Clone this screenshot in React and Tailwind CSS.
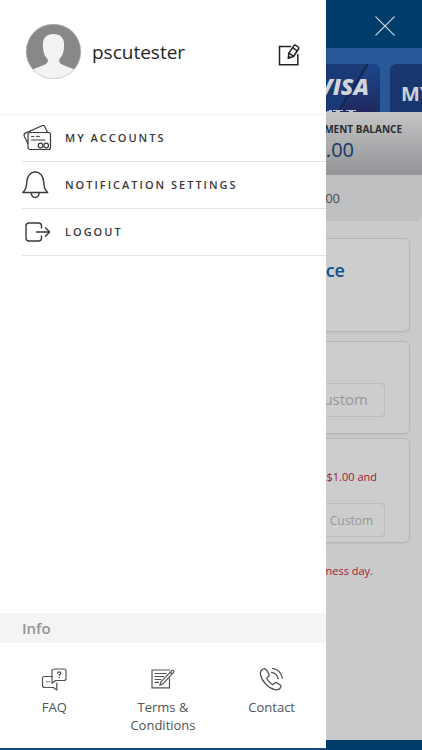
import React from "react";

const stroke = {
  fill: "none",
  stroke: "currentColor",
  strokeLinecap: "round",
  strokeLinejoin: "round",
};

const CardsIcon = () => (
  <svg width="30" height="30" viewBox="0 0 30 30" strokeWidth="1.2" {...stroke}>
    <rect x="6" y="9.5" width="22.5" height="17" rx="2" />
    <path d="M5.800 20.500 2.300 13.200C1.800 11.800 2.200 10.600 3.500 10.100L20 2.700c1.400-.5 2.500 0 3 1.300L25.500 9.200" />
    <path d="M9.500 13.400h2.500M14.500 13.400h3M9.500 17h13.500" strokeWidth="1" />
    <circle cx="18.500" cy="22.500" r="2.300" />
    <circle cx="24.200" cy="22.500" r="2.300" />
  </svg>
);

const BellIcon = () => (
  <svg width="30" height="30" viewBox="0 0 30 30" strokeWidth="1.400" {...stroke}>
    <path d="M.8 22.500C3.800 20 4.600 17.500 4.800 12 5 5.800 8.500 2 13.200 2S21.500 5.800 21.700 12c.2 5.500 1 8 4 10.500Z" />
    <path d="M9.200 22.800c.2 3 1.800 4.700 4 4.700s3.800-1.700 4-4.700" />
  </svg>
);

const LogoutIcon = () => (
  <svg width="30" height="30" viewBox="0 0 30 30" strokeWidth="1.400" {...stroke}>
    <path d="M19.500 11V9c0-1.800-1.100-3-2.800-3H7c-1.800 0-3 1.200-3 3v12c0 1.800 1.200 3 3 3h9.700c1.700 0 2.800-1.200 2.800-3v-2" />
    <path d="M14.500 15h13M23.500 10.800l4.200 4.200-4.200 4.200" />
  </svg>
);

const EditIcon = () => (
  <svg width="22" height="22" viewBox="0 0 22 22" strokeWidth="1.500" {...stroke}>
    <path d="M12.500 2.500H1.500V20.800h18.300V10.500" strokeLinejoin="miter" />
    <path d="M10.300 14.300l.5-5.100 5-7.400c.5-.8 1.300-.9 2-.4l2.400 1.600c.7.500.8 1.300.3 2l-5 7.500Z" />
    <path d="M10.900 9.200l4.500 3M14.600 3.700l4.600 3.100" />
    <path d="M10.400 13.800l1.200-.8" />
  </svg>
);

const FaqIcon = () => (
  <svg width="26" height="24" viewBox="0 0 26 24" strokeWidth="1.200" {...stroke}>
    <path d="M13.500 2H23c1.200 0 2 .8 2 2v7.500c0 1.200-.8 2-2 2h-8.500L11 16.300V4c0-1.200 1-2 2.500-2Z" />
    <path d="M10.800 9.500H3.500c-1.200 0-2 .8-2 2v7c0 1.200.8 2 2 2h8.800l3.500 2.500V16" />
    <path d="M5.600 14.800h.4M8 14.800h.4" strokeWidth="1.300" />
    <path d="M16.600 6.300c0-1 .7-1.500 1.600-1.500s1.600.6 1.600 1.400c0 1.100-1.500 1.200-1.500 2.300M18.200 10.400v.1" strokeWidth="1.300" />
  </svg>
);

const TermsIcon = () => (
  <svg width="26" height="24" viewBox="0 0 26 24" strokeWidth="1.200" {...stroke}>
    <path d="M19.500 3H2v17.800H19.500V11.500" strokeLinejoin="miter" />
    <path d="M9.800 18.300l1.200-3.500L21.800 3.700c.5-.5 1.200-.5 1.700 0s.5 1.200 0 1.700L13 16.800ZM20.300 5.300l1.800 1.700" />
    <path d="M5 6.500h11M5 9.500h8.500M5 12.500h6M5 15.300h3.500" />
  </svg>
);

const PhoneIcon = () => (
  <svg width="26" height="24" viewBox="0 0 26 24" strokeWidth="1.300" {...stroke}>
    <path d="M4.300 2C2 3 1 5 1.500 7.700 2.800 14.500 9.500 21.500 16.500 22.800c2.500.4 4.500-.8 5.300-2.700.3-.8 0-1.500-.6-2l-3-2.200c-.8-.6-1.700-.5-2.400.1l-1.300 1.200c-.5.4-1 .4-1.500.1-2.200-1.400-3.900-3.200-5-5.500-.3-.6-.2-1.100.3-1.500l1.200-1c.7-.7.9-1.500.4-2.400L7.500 3.200c-.7-1.200-1.900-1.800-3.200-1.200Z" />
    <path d="M12.500 5.300c3.500.6 6 3 6.700 6.200M13.500 1.300c5.300.9 8.900 4.600 9.800 9.800" />
  </svg>
);

const Avatar = () => (
  <svg className="shrink-0" width="56" height="56" viewBox="0 0 56 56" aria-hidden="true">
    <defs>
      <clipPath id="avatar-clip">
        <circle cx="28.500" cy="27.500" r="27.500" />
      </clipPath>
    </defs>
    <g clipPath="url(#avatar-clip)">
      <rect width="56" height="56" fill="#888888" />
      <path
        fill="#f3f3f3"
        d="M28.500 10c-7 0-11 4-10.600 11.500.3 7 1.600 10.500 4.600 13.500 1 3-.3 4.500-3 5.800L5 46.500V56h47v-9.500l-14.500-5.700c-2.700-1.300-4-2.800-3-5.800 3-3 4.300-6.500 4.600-13.500C39.500 14 35.500 10 28.500 10Z"
      />
    </g>
    <circle cx="28.500" cy="27.500" r="27.200" fill="none" stroke="#c4c4c4" strokeWidth=".5" />
  </svg>
);

const MENU_ITEMS = [
  { label: "MY ACCOUNTS", icon: CardsIcon },
  { label: "NOTIFICATION SETTINGS", icon: BellIcon },
  { label: "LOGOUT", icon: LogoutIcon },
];

const INFO_LINKS = [
  { label: "FAQ", icon: FaqIcon },
  { label: "Terms & Conditions", icon: TermsIcon },
  { label: "Contact", icon: PhoneIcon },
];

const Drawer = () => (
  <aside className="absolute inset-y-0 left-0 z-10 flex w-[326px] flex-col border-b-2 border-[#124a7e] bg-white">
    <div className="flex h-[115px] items-start border-b border-[#f1f1f1] pt-6 pl-[25px] pr-[26px]">
      <Avatar />
      <span className="ml-[11px] flex-1 text-[19px] leading-[56px] text-[#262626]">pscutester</span>
      <button aria-label="Edit profile" className="mt-5 text-[#222]">
        <EditIcon />
      </button>
    </div>

    <nav className="flex-1 pl-[22px]">
      {MENU_ITEMS.map(({ label, icon: Icon }) => (
        <a
          key={label}
          href="#"
          className="flex h-[47px] items-center gap-[13px] border-b border-[#e4e4e4] text-[11px] font-semibold tracking-[2px] text-[#3a3a3a]"
        >
          <Icon />
          {label}
        </a>
      ))}
    </nav>

    <h2 className="bg-[#f4f4f4] pl-[22px] text-[15px] leading-[30px] font-semibold text-[#959595]">Info</h2>
    <div className="grid h-[105px] grid-cols-3 pt-6">
      {INFO_LINKS.map(({ label, icon: Icon }) => (
        <a
          key={label}
          href="#"
          className="flex flex-col items-center gap-[7px] px-4 text-center text-[13px] leading-[18px] text-[#505356]"
        >
          <Icon />
          {label}
        </a>
      ))}
    </div>
  </aside>
);

const Panel = ({ className, children }) => (
  <section className={`rounded-md border border-[#b6b6b6] bg-[#cdcdcd] shadow-xs ${className}`}>{children}</section>
);

const PaymentPage = () => (
  <main className="flex min-h-screen flex-col bg-[#cacaca]">
    <header className="flex h-12 items-center justify-end bg-[#003c69] pt-1 pr-[27px]">
      <button aria-label="Close menu" className="text-[#ccd8e1]">
        <svg width="20" height="20" viewBox="0 0 20 20" strokeWidth="1.200" {...stroke}>
          <path d="M.8.800 19.200 19.200M19.200.800.800 19.200" />
        </svg>
      </button>
    </header>

    <div className="flex h-16 justify-end gap-[10px] overflow-hidden bg-[#28589a] pt-4">
      <div className="w-60 overflow-hidden rounded-t-md">
        <svg width="240" height="48" viewBox="0 0 240 48">
          <defs>
            <linearGradient id="visa-dark" x1="0" y1="0" x2="0" y2="1">
              <stop offset="0" stopColor="#1c478b" />
              <stop offset="1" stopColor="#20295f" />
            </linearGradient>
          </defs>
          <rect width="240" height="48" fill="#193a77" />
          <path d="M228 0h12v48h-42Z" fill="url(#visa-dark)" />
          <path d="M228 0 198 48" stroke="#12264f" strokeWidth="2" />
          <text x="229" y="31" textAnchor="end" fontSize="23" fontWeight="800" fontStyle="italic" fill="#d2d4d8">
            VISA
          </text>
          <path d="M187 47h2v-1h3v2h-5ZM193 46h10v1h-3v1h-4v-1h-3ZM206 46h10v1h-3v1h-4v-1h-3Z" fill="#c0c4cf" />
        </svg>
      </div>
      <div className="w-8 overflow-hidden rounded-tl-md bg-[#19376f] pt-[15px] pl-[11px] text-[20px] leading-[30px] font-bold whitespace-nowrap text-[#cdd2db]">
        MY
      </div>
    </div>

    <div className="flex h-[63px] flex-col items-end bg-linear-to-b from-[#c6c6c7] to-[#929497] pt-[10px] pr-5">
      <span className="text-[10px] leading-[14px] font-bold text-[#2c2c30]">STATEMENT BALANCE</span>
      <span className="pr-12 text-[20px] leading-[27px] text-[#1b3563]">$0.00</span>
    </div>
    <div className="rounded-br-md bg-[#bebfc1] pr-[82px] text-right text-[13px] leading-[46px] text-[#4c4d50]">
      $0.00
    </div>

    <div className="flex-1 px-3 pt-[17px]">
      <Panel className="h-[94px] pt-[17px] pr-16 text-right text-[18px] leading-[28px] font-semibold text-[#0f5190]">
        Current Balance
      </Panel>
      <Panel className="mt-[9px] flex h-[93px] justify-end pt-[41px] pr-6">
        <button className="h-[34px] w-24 rounded-sm border border-[#bcbcbc] pr-4 pb-[2px] text-right text-[15px] text-[#96979a]">
          Custom
        </button>
      </Panel>
      <Panel className="mt-[4px] flex h-[105px] flex-col items-end gap-[18px] pt-[30px] pr-6">
        <p className="pr-2 text-[11px] leading-[16px] text-[#a5182e]">Enter an amount between $1.00 and</p>
        <button className="h-[34px] w-24 rounded-sm border border-[#bcbcbc] pt-[2px] pr-[11px] text-right text-[12px] text-[#96979a]">
          Custom
        </button>
      </Panel>
      <p className="mt-5 pr-[37px] text-right text-[11px] leading-[16px] text-[#a5182e]">
        Payments post the next business day.
      </p>
    </div>

    <footer className="h-[10px] bg-[#003c69]" />
  </main>
);

export default function App() {
  return (
    <div className="relative min-h-screen overflow-hidden font-['Open_Sans','Noto_Sans',sans-serif]">
      <PaymentPage />
      <Drawer />
    </div>
  );
}
